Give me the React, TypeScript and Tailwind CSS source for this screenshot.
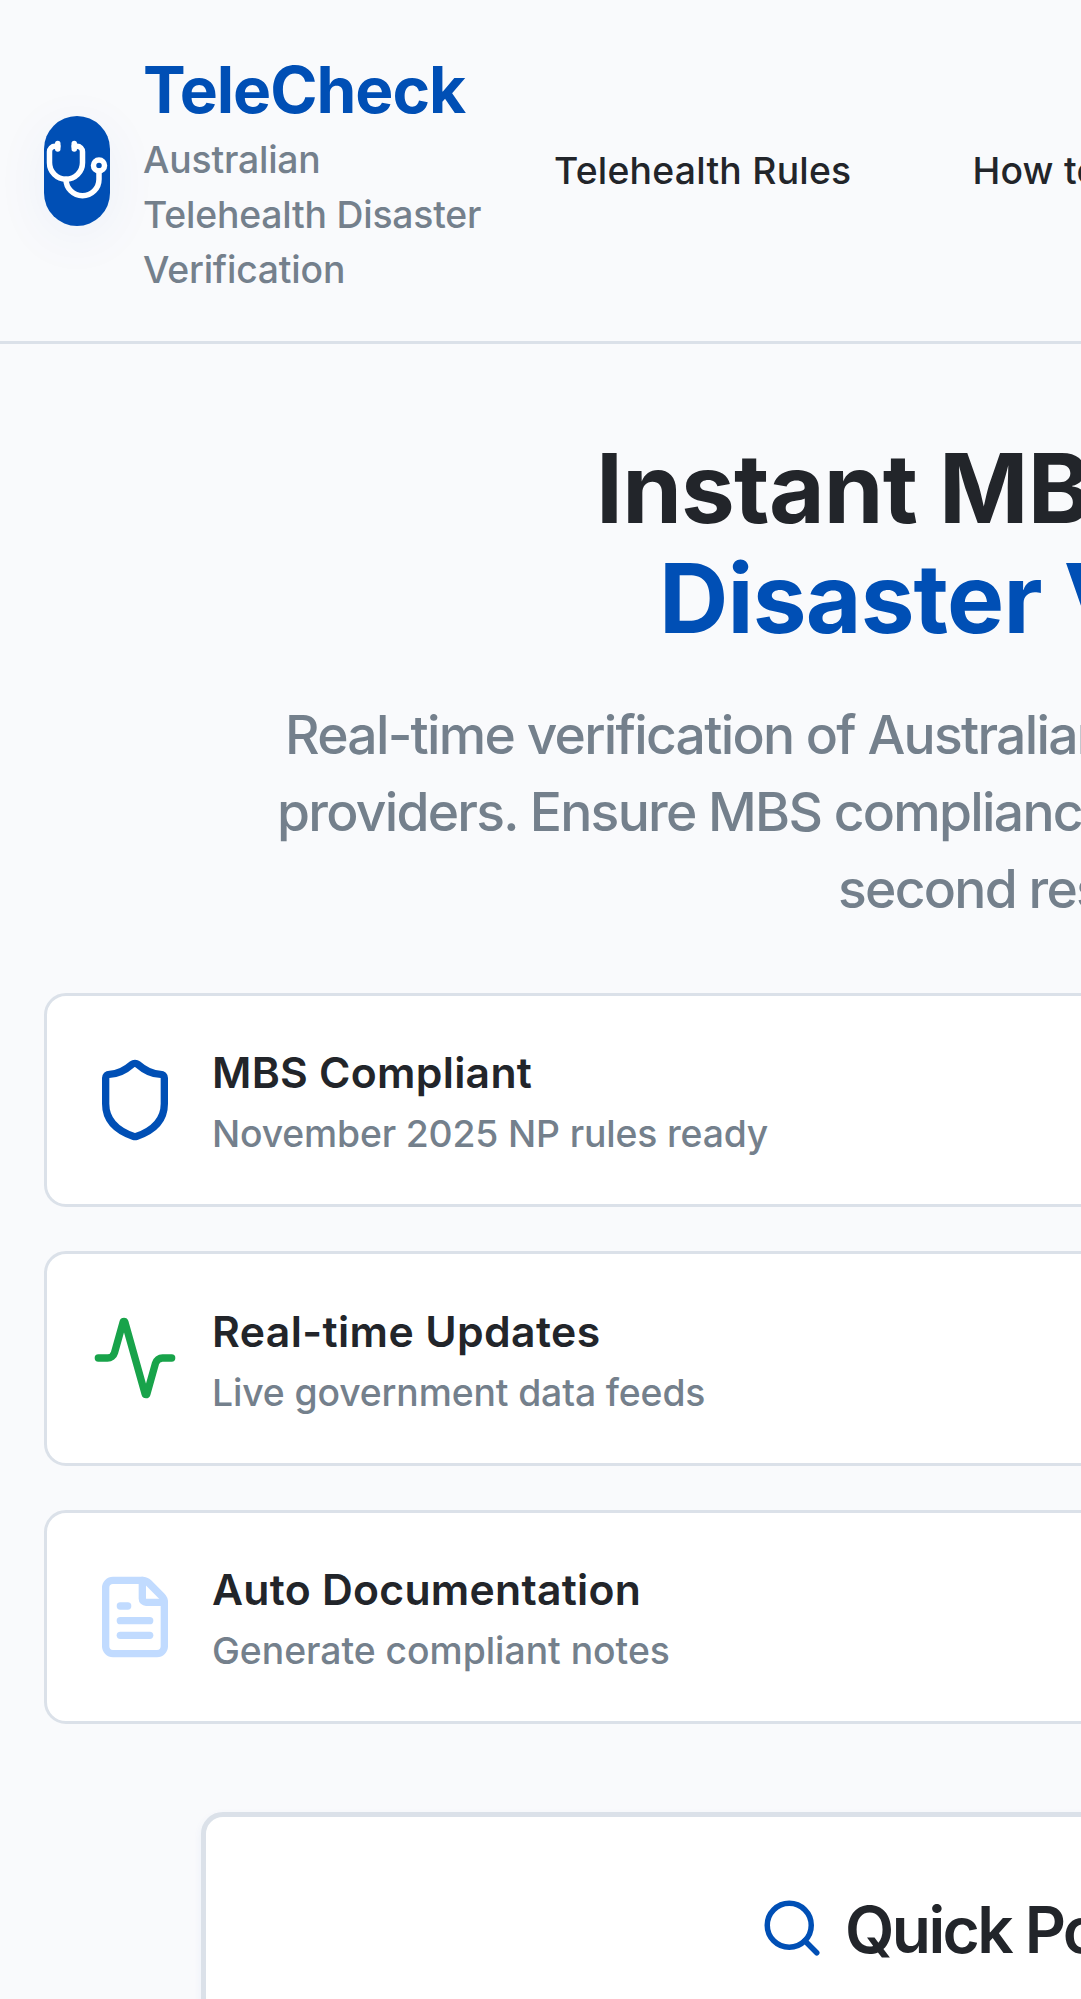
import React from 'react';
import { Activity, FileText, Search, Shield, Stethoscope } from 'lucide-react';

const features = [
  {
    Icon: Shield,
    color: 'text-[#004fb5]',
    title: 'MBS Compliant',
    titleTracking: 'tracking-[0.27px]',
    note: 'November 2025 NP rules ready',
    noteTracking: 'tracking-[-0.15px]',
  },
  {
    Icon: Activity,
    color: 'text-[#18a34a]',
    title: 'Real-time Updates',
    titleTracking: 'tracking-[0.4px]',
    note: 'Live government data feeds',
    noteTracking: 'tracking-[-0.12px]',
  },
  {
    Icon: FileText,
    color: 'text-[#c1dbff]',
    title: 'Auto Documentation',
    titleTracking: 'tracking-[0.27px]',
    note: 'Generate compliant notes',
    noteTracking: 'tracking-[-0.02px]',
  },
];

function Header() {
  return (
    <header className="flex h-[344px] items-center border-b-[3px] border-[#dbe1e9] pl-[44px]">
      <div className="flex h-[110px] w-[66px] shrink-0 items-center justify-center rounded-[33px] bg-[#004fb5] shadow-[0_11px_55px_rgba(0,79,181,0.06)]">
        <Stethoscope className="size-[66px] text-white" strokeWidth={2} />
      </div>
      <div className="ml-[33px] w-[411px] shrink-0">
        <div className="pt-[3px] text-[64px] leading-[85px] font-bold tracking-[-1.03px] text-[#004fb5]">TeleCheck</div>
        <p className="w-[350px] text-[37.3px] leading-[55px] font-medium tracking-[-0.19px] text-[#74808c]">
          Australian Telehealth Disaster Verification
        </p>
      </div>
      <nav className="flex shrink-0 gap-[121px] text-[37.3px] leading-[55px] font-medium tracking-[0.24px] whitespace-nowrap">
        <a>Telehealth Rules</a>
        <a>How to Use</a>
      </nav>
    </header>
  );
}

function Hero() {
  return (
    <section className="pt-[89px] whitespace-nowrap">
      <h1 className="text-[96px] leading-[110px] font-bold tracking-[-0.8px]">
        <span className="block pl-[596px]">Instant MBS</span>
        <span className="block pl-[659px] text-[#004fb5]">Disaster Verification</span>
      </h1>
      <p className="mt-[43px] text-[53.4px] leading-[77px] font-medium tracking-[-1.72px] text-[#74808c]">
        <span className="block pl-[285px]">Real-time verification of Australian</span>
        <span className="block pl-[277px]">providers. Ensure MBS compliance</span>
        <span className="block pl-[838px]">second response</span>
      </p>
    </section>
  );
}

function Features() {
  return (
    <section className="mt-[65.7px] flex w-[1200px] flex-col gap-[44px] pl-[44px]">
      {features.map(({ Icon, color, title, titleTracking, note, noteTracking }) => (
        <div
          key={title}
          className="flex h-[214.5px] items-center rounded-[22px] border-[3px] border-[#dbe1e9] bg-white pl-[43.5px]"
        >
          <Icon className={`size-[88px] shrink-0 ${color}`} strokeWidth={2} />
          <div className="ml-[33.5px] pt-[2px] whitespace-nowrap">
            <h3 className={`text-[42.7px] leading-[66px] font-semibold ${titleTracking}`}>{title}</h3>
            <p className={`text-[37.3px] leading-[55px] font-medium text-[#74808c] ${noteTracking}`}>{note}</p>
          </div>
        </div>
      ))}
    </section>
  );
}

function QuickCheck() {
  return (
    <section className="mt-[88px] ml-[201px] flex h-[400px] w-[1200px] items-start rounded-[22px] border-[5.5px] border-[#dbe1e9] bg-white pt-[69px] pl-[553px] shadow-[0_3px_8px_rgba(0,79,181,0.06)]">
      <div className="flex h-[88px] items-center whitespace-nowrap">
        <Search className="mt-[-4px] size-[66px] shrink-0 text-[#004fb5]" strokeWidth={2} />
        <h2 className="ml-[20px] text-[64px] leading-[88px] font-semibold tracking-[-2.6px]">Quick Postcode</h2>
      </div>
    </section>
  );
}

export default function App() {
  return (
    <div className="h-[1999px] w-full overflow-hidden bg-[#f9fafc] font-[Inter,sans-serif] text-[#22252a]">
      <Header />
      <Hero />
      <Features />
      <QuickCheck />
    </div>
  );
}
